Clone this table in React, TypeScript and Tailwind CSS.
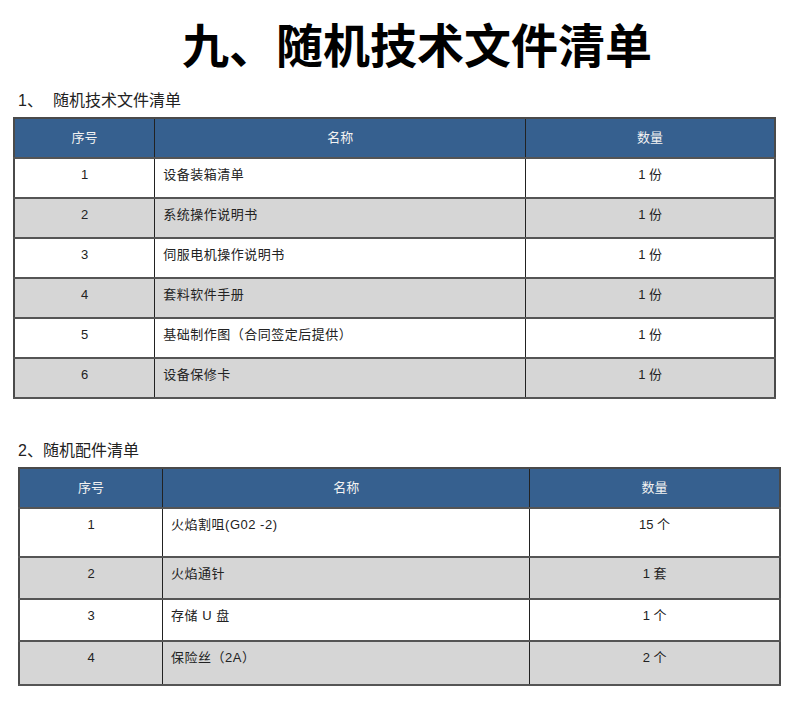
const font = 'font-["Liberation_Sans","Noto_Sans_CJK_SC",sans-serif]';

type Row = { no: string; name: string; qty: string };

const docs: Row[] = [
  { no: '1', name: '设备装箱清单', qty: '1 份' },
  { no: '2', name: '系统操作说明书', qty: '1 份' },
  { no: '3', name: '伺服电机操作说明书', qty: '1 份' },
  { no: '4', name: '套料软件手册', qty: '1 份' },
  { no: '5', name: '基础制作图（合同签定后提供）', qty: '1 份' },
  { no: '6', name: '设备保修卡', qty: '1 份' },
];

const parts: Row[] = [
  { no: '1', name: '火焰割咀(G02 -2)', qty: '15 个' },
  { no: '2', name: '火焰通针', qty: '1 套' },
  { no: '3', name: '存储 U 盘', qty: '1 个' },
  { no: '4', name: '保险丝（2A）', qty: '2 个' },
];

function ListTable({ rows, cols, heights }: { rows: Row[]; cols: string[]; heights: string[] }) {
  return (
    <table className="w-[763px] border-collapse border-2 border-[#4a4a4a] text-[13px] text-[#222]">
      <colgroup>
        {cols.map((w, i) => (
          <col key={i} style={{ width: w }} />
        ))}
      </colgroup>
      <thead>
        <tr className="h-[40px] bg-[#36608f] text-[#f2f2f2]">
          <th className="border border-[#222] font-normal">序号</th>
          <th className="border border-[#222] font-normal">名称</th>
          <th className="border border-[#222] font-normal">数量</th>
        </tr>
      </thead>
      <tbody>
        {rows.map((r, i) => (
          <tr key={r.no} className={i % 2 === 1 ? 'bg-[#d6d6d6]' : 'bg-white'} style={{ height: heights[i] }}>
            <td className="border-x border-x-[#222] border-y-2 border-y-[#555] pt-[6px] align-top text-center">{r.no}</td>
            <td className="border-x border-x-[#222] border-y-2 border-y-[#555] pt-[6px] pl-[8px] align-top tracking-[0.5px]">{r.name}</td>
            <td className="border-x border-x-[#222] border-y-2 border-y-[#555] pt-[6px] align-top text-center">{r.qty}</td>
          </tr>
        ))}
      </tbody>
    </table>
  );
}

export default function App() {
  return (
    <div className={`w-[790px] h-[715px] bg-white ${font}`}>
      <h1 className="pt-[18px] pl-[44px] text-center text-[47px] leading-[58px] font-bold text-black">
        九、随机技术文件清单
      </h1>
      <div className="pl-[18px] pt-[15px] text-[16px] leading-[20px] text-[#222]">
        1、<span className="ml-[10px]">随机技术文件清单</span>
      </div>
      <div className="pl-[13px] pt-[6px]">
        <ListTable rows={docs} cols={['141px', '372px', '250px']} heights={['40px', '40px', '40px', '40px', '40px', '40px']} />
      </div>
      <div className="pl-[18px] pt-[41px] text-[16px] leading-[22px] text-[#222]">2、随机配件清单</div>
      <div className="pl-[18px] pt-[5px]">
        <ListTable rows={parts} cols={['144px', '368px', '251px']} heights={['49px', '42px', '42px', '44px']} />
      </div>
    </div>
  );
}
